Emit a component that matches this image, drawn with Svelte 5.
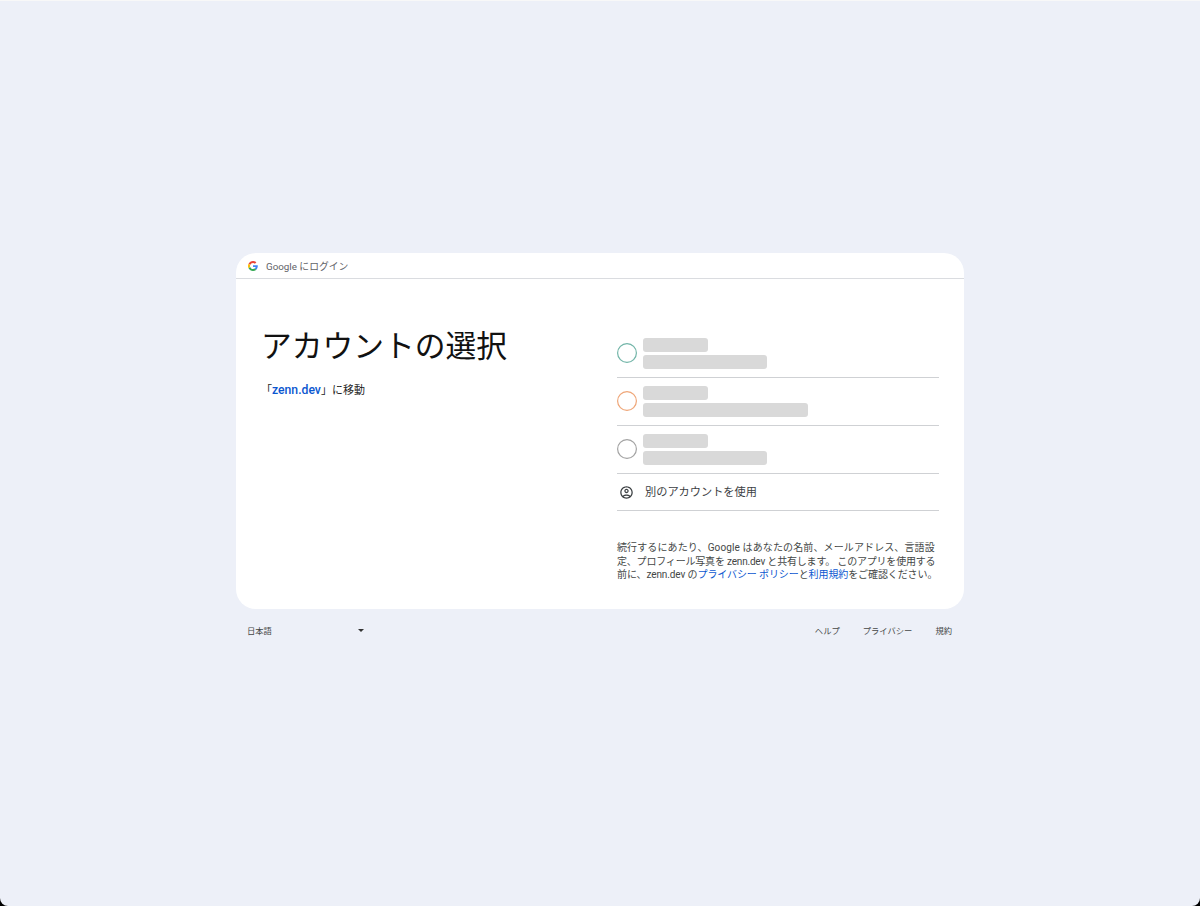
<script>
  const accounts = [
    { color: '#72b5a8', width: 124 },
    { color: '#efa678', width: 165 },
    { color: '#a3a3a3', width: 124 }
  ];
  const footerLinks = ['ヘルプ', 'プライバシー', '規約'];
</script>

<div class="page">
  <div class="wrap">
    <div class="card">
      <div class="card-header">
        <svg class="g-logo" viewBox="0 0 48 48" width="10" height="10" aria-hidden="true">
          <path fill="#ea4335" d="M24 9.5c3.5 0 6.700 1.200 9.200 3.600l6.900-6.900C35.900 2.400 30.500 0 24 0 14.600 0 6.500 5.400 2.600 13.200l8 6.200C12.500 13.700 17.800 9.500 24 9.500z"/>
          <path fill="#4285f4" d="M47 24.500c0-1.600-.1-3.100-.4-4.500H24v9h12.900c-.6 3-2.200 5.500-4.700 7.200l7.700 6C44.400 37.900 47 31.800 47 24.500z"/>
          <path fill="#fbbc05" d="M10.500 28.600c-.5-1.400-.8-3-.8-4.600s.3-3.200.8-4.600l-8-6.200C.900 16.500 0 20.100 0 24s.9 7.500 2.600 10.800l7.900-6.200z"/>
          <path fill="#34a853" d="M24 48c6.500 0 11.900-2.100 15.900-5.800l-7.700-6c-2.200 1.500-4.900 2.300-8.200 2.300-6.200 0-11.500-4.200-13.400-9.900l-8 6.200C6.500 42.600 14.600 48 24 48z"/>
        </svg>
        <span>Google にログイン</span>
      </div>
      <div class="card-body">
        <div class="intro">
          <h1>アカウントの選択</h1>
          <p class="dest">「<a href="#zenn">zenn.dev</a>」に移動</p>
        </div>
        <div class="chooser">
          <ul class="accounts">
            {#each accounts as account}
              <li class="account">
                <svg class="avatar" viewBox="0 0 20 20" width="20" height="20" aria-hidden="true">
                  <circle cx="10" cy="10" r="9.400" fill="none" stroke={account.color} stroke-width="1.200" />
                </svg>
                <div class="masks">
                  <span class="mask name"></span>
                  <span class="mask email" style="width: {account.width}px"></span>
                </div>
              </li>
            {/each}
            <li class="other">
              <svg viewBox="0 0 24 24" width="15" height="15" fill="#3c4043" aria-hidden="true">
                <path d="M12 2C6.480 2 2 6.480 2 12s4.480 10 10 10 10-4.480 10-10S17.520 2 12 2zM7.350 18.500C8.660 17.560 10.260 17 12 17s3.340.56 4.650 1.500C15.340 19.440 13.740 20 12 20s-3.340-.56-4.650-1.500zm10.790-1.380C16.450 15.800 14.320 15 12 15s-4.450.8-6.140 2.120C4.700 15.730 4 13.950 4 12c0-4.420 3.580-8 8-8s8 3.580 8 8c0 1.950-.7 3.730-1.860 5.120z"/>
                <path d="M12 6c-1.930 0-3.500 1.570-3.500 3.500S10.070 13 12 13s3.500-1.570 3.500-3.500S13.930 6 12 6zm0 5c-.83 0-1.500-.67-1.500-1.500S11.170 8 12 8s1.500.67 1.500 1.500S12.830 11 12 11z"/>
              </svg>
              <span class="other-label">別のアカウントを使用</span>
            </li>
          </ul>
          <div class="notice">
            <p class="line-1">続行するにあたり、Google はあなたの名前、メールアドレス、言語設</p>
            <p class="line-2">定、プロフィール写真を zenn.dev と共有します。 このアプリを使用する</p>
            <p class="line-3">前に、zenn.dev の<a href="#privacy">プライバシー ポリシー</a>と<a href="#terms">利用規約</a>をご確認ください。</p>
          </div>
        </div>
      </div>
    </div>
    <div class="footer">
      <div class="lang">
        <span>日本語</span>
        <span class="caret"></span>
      </div>
      <div class="links">
        {#each footerLinks as link}
          <span>{link}</span>
        {/each}
      </div>
    </div>
  </div>
</div>

<style>
  :global(body) {
    background: #000;
  }

  .page {
    height: 905px;
    border-top: 1px solid #f8f8f8;
    border-radius: 0 0 8px 8px;
    background: #edf0f8;
    display: flex;
    align-items: center;
    justify-content: center;
    font-family: "Roboto", "Noto Sans CJK JP", sans-serif;
    color: #1f1f1f;
  }

  .wrap {
    width: 728px;
    margin-top: -1px;
  }

  .card {
    height: 356px;
    background: #fff;
    border-radius: 20px;
    display: flex;
    flex-direction: column;
  }

  .card-header {
    height: 26px;
    flex: none;
    border-bottom: 1px solid #dadce0;
    display: flex;
    align-items: center;
    gap: 8px;
    padding-left: 12px;
    font-size: 9.800px;
    color: #5f6368;
    box-sizing: border-box;
  }

  .card-body {
    flex: 1;
    display: flex;
    padding: 0 25px;
  }

  .intro {
    width: 356px;
    flex: none;
  }

  h1 {
    margin: 45px 0 0;
    font-size: 30.750px;
    line-height: 46px;
    font-weight: 400;
    color: #111;
  }

  .dest {
    margin: 12px 0 0;
    font-size: 11px;
    line-height: 16px;
  }

  a {
    color: #0b57d0;
    text-decoration: none;
  }

  .dest a {
    font-size: 12.200px;
    font-weight: 500;
  }

  .chooser {
    flex: 1;
    padding-top: 51px;
  }

  .accounts {
    list-style: none;
    margin: 0;
    padding: 0;
  }

  .account {
    height: 48px;
    box-sizing: border-box;
    border-bottom: 1px solid #cfd1d4;
    display: flex;
    align-items: center;
    gap: 6px;
  }

  .avatar {
    flex: none;
    margin-bottom: 2px;
  }

  .masks {
    display: flex;
    flex-direction: column;
    gap: 3px;
  }

  .mask {
    display: block;
    height: 14px;
    border-radius: 3px;
    background: #d9d9d9;
  }

  .name {
    width: 65px;
  }

  .other {
    height: 37px;
    box-sizing: border-box;
    border-bottom: 1px solid #cfd1d4;
    display: flex;
    align-items: center;
    gap: 11px;
    padding-left: 2px;
    font-size: 11.200px;
    color: #3c4043;
  }

  .other-label {
    margin-bottom: 2px;
  }

  .notice {
    margin-top: 30px;
    font-size: 10px;
    line-height: 13.500px;
    color: #444746;
    white-space: nowrap;
  }

  .notice p {
    margin: 0;
  }

  .line-1 {
    letter-spacing: 0.12px;
  }

  .line-2 {
    letter-spacing: -0.19px;
  }

  .line-3 {
    letter-spacing: -0.1px;
  }

  .footer {
    height: 44px;
    display: flex;
    align-items: center;
    justify-content: space-between;
    padding: 0 12px 2px 11px;
    box-sizing: border-box;
    font-size: 8.300px;
    color: #444746;
  }

  .lang {
    width: 117px;
    display: flex;
    align-items: center;
    justify-content: space-between;
  }

  .caret {
    width: 0;
    height: 0;
    border-left: 3px solid transparent;
    border-right: 3px solid transparent;
    border-top: 3px solid #333;
  }

  .links {
    display: flex;
    gap: 23px;
  }
</style>
